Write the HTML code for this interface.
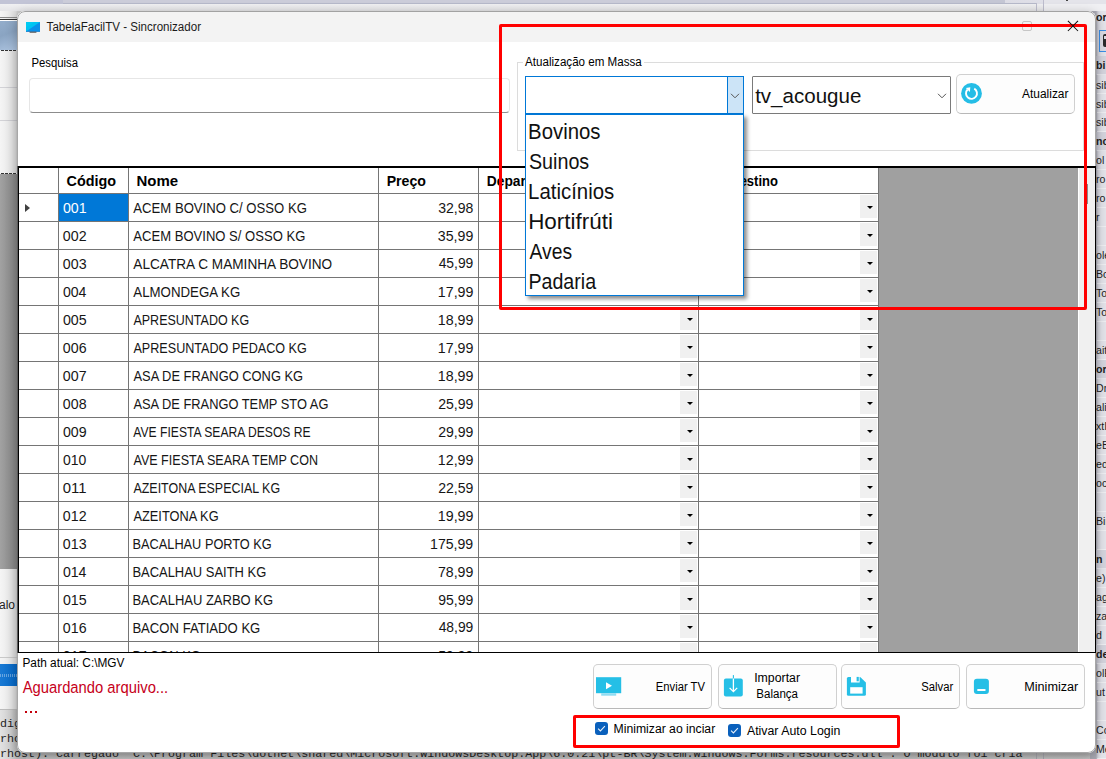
<!DOCTYPE html><html><head><meta charset="utf-8"><title>TabelaFacilTV - Sincronizador</title><style>
*{box-sizing:border-box;margin:0;padding:0}
html,body{width:1106px;height:759px;overflow:hidden;background:#e9e9ec;font-family:"Liberation Sans",sans-serif;color:#000}
.abs{position:absolute}
#bg{position:absolute;left:0;top:0;width:1106px;height:759px;overflow:hidden}
#win{position:absolute;left:17px;top:11px;width:1079px;height:742px;background:#fff;border-radius:8px;overflow:hidden}
#winsh{position:absolute;left:17px;top:11px;width:1079px;height:742px;border-radius:8px;box-shadow:0 3px 12px rgba(0,0,0,.3)}
#tbar{position:absolute;left:0;top:0;width:100%;height:31px;background:#f3f3f3}
.t{position:absolute;left:0;top:0;white-space:nowrap;line-height:1;transform-origin:0 0}
#grid{position:absolute;left:1px;top:155px;width:1078px;height:487px;background:#a0a0a0;border:1px solid #000;border-top:2px solid #000;overflow:hidden}
.hl{position:absolute;left:0;height:1px;background:#757575;width:860px}
.vl{position:absolute;top:0;width:1px;background:#757575;height:486px}
.dd{position:absolute;width:17px;height:23px;background:#f0f0f0}
.dd:after{content:"";position:absolute;left:6.5px;top:10.6px;border-left:3px solid transparent;border-right:3px solid transparent;border-top:3.6px solid #000}
.btn{position:absolute;background:#fdfdfd;border:1px solid #d0d0d0;border-bottom-color:#b8b8b8;border-radius:5px}
</style></head><body>
<div id="bg">
<div class="abs" style="left:0;top:0;width:1106px;height:759px;background:#e6e6ea"></div>
<div class="abs" style="left:0;top:0;width:1106px;height:4px;background:linear-gradient(90deg,#c2c4d6 0,#c2c4d6 63px,#cbccd9 63px,#cbccd9 900px,#c4c6d4 900px,#c4c6d4 1005px,#dddde6 1005px,#e2e2ea 100%)"></div>
<div class="abs" style="left:63px;top:3px;width:973px;height:1px;background:#b6b9ca"></div>
<div class="abs" style="left:0;top:4px;width:1106px;height:9px;background:linear-gradient(180deg,#f0f0f2,#e2e2e5)"></div>
<div class="abs" style="left:1043px;top:0;width:63px;height:4px;background:#e4e4ea"></div>
<div class="abs" style="left:1043px;top:4px;width:63px;height:9px;background:#f0f0f3"></div>
<div class="abs" style="left:1036px;top:3px;width:1px;height:9px;background:#bcbccc"></div>
<div class="abs" style="left:1043px;top:0;width:1px;height:12px;background:#bcbccc"></div>
<div class="abs" style="left:1066px;top:0;width:2px;height:1px;background:#444"></div>
<div class="abs" style="left:0;top:11px;width:26px;height:163px;background:linear-gradient(90deg,#f5f5f5 0,#eaeaea 9px,#dcdcdc 16px,#cfcfcf 17px,#c8c8c8 26px)"></div>
<div class="abs" style="left:0;top:17px;width:18px;height:1px;background:#8a8a8a"></div>
<div class="abs" style="left:0;top:19px;width:18px;height:1px;background:#333"></div>
<div class="abs" style="left:0;top:20px;width:18px;height:1px;background:#fff"></div>
<div class="abs" style="left:0;top:21px;width:26px;height:29px;background:linear-gradient(160deg,#93adcb 0,#8aa4c2 40%,#b3cae6 100%)"></div>
<div class="abs" style="left:1px;top:50px;width:16px;height:1px;background:repeating-linear-gradient(90deg,#333 0,#333 3px,transparent 3px,transparent 4px)"></div>
<div class="abs" style="left:0;top:87px;width:17px;height:1px;background:rgba(170,170,180,.45)"></div>
<div class="abs" style="left:0;top:120px;width:17px;height:1px;background:rgba(170,170,180,.45)"></div>
<div class="abs" style="left:1px;top:173px;width:16px;height:1px;background:repeating-linear-gradient(90deg,#333 0,#333 3px,#eee 3px,#eee 4px)"></div>
<div class="abs" style="left:0;top:174px;width:26px;height:395px;background:linear-gradient(90deg,#a2a2a2 0,#939393 8px,#858585 17px)"></div>
<div class="abs" style="left:0;top:569px;width:26px;height:88px;background:linear-gradient(90deg,#f5f5f5 0,#eaeaea 9px,#dcdcdc 16px,#cfcfcf 17px,#c8c8c8 26px)"></div>
<div class="abs" style="left:-1px;top:598px;font-size:12px;line-height:14px;color:#222;white-space:nowrap">alo</div>
<div class="abs" style="left:0;top:657px;width:26px;height:1px;background:#c8c8c8"></div>
<div class="abs" style="left:0;top:658px;width:26px;height:6px;background:linear-gradient(90deg,#f5f5f5 0,#eaeaea 9px,#dcdcdc 16px,#cfcfcf 17px,#c8c8c8 26px)"></div>
<div class="abs" style="left:0;top:664px;width:26px;height:22px;background:linear-gradient(90deg,#1a7ad4,#0668c6 17px)"></div>
<div class="abs" style="left:0;top:674px;width:17px;height:3px;background:repeating-linear-gradient(90deg,rgba(255,255,255,.35) 0,rgba(255,255,255,.35) 1px,transparent 1px,transparent 2px)"></div>
<div class="abs" style="left:0;top:686px;width:26px;height:23px;background:linear-gradient(90deg,#f5f5f5 0,#eaeaea 9px,#dcdcdc 16px,#cfcfcf 17px,#c8c8c8 26px)"></div>
<div class="abs" style="left:0;top:709px;width:26px;height:1px;background:#bbb"></div>
<div class="abs" style="left:0;top:710px;width:1106px;height:49px;background:linear-gradient(180deg,#dcdcdc 0,#d0d0d0 40px,#b4b4b4 44px,#c6c6c6 49px)"></div>
<div class="abs" style="left:0;top:710px;width:26px;height:49px;background:linear-gradient(90deg,#e2e2e2 0,#d0d0d0 10px,#b8b8b8 17px)"></div>
<div class="abs" style="left:0;top:717px;font-family:'Liberation Mono',monospace;font-size:11.68px;line-height:14px;color:#1e1e1e;white-space:pre">dig</div>
<div class="abs" style="left:0;top:732px;font-family:'Liberation Mono',monospace;font-size:11.68px;line-height:14px;color:#1e1e1e;white-space:pre">rho</div>
<div class="abs" style="left:0;top:747px;font-family:'Liberation Mono',monospace;font-size:11.68px;line-height:14px;color:#1e1e1e;white-space:pre">rhost). Carregado 'C:\Program Files\dotnet\shared\Microsoft.WindowsDesktop.App\6.0.21\pt-BR\System.Windows.Forms.resources.dll'. O módulo foi cria</div>
<div class="abs" style="left:1036px;top:753px;width:1px;height:6px;background:#a8a8b0"></div>
<div class="abs" style="left:1043px;top:753px;width:1px;height:6px;background:#a8a8b0"></div>
<div class="abs" style="left:1090px;top:11px;width:16px;height:748px;background:linear-gradient(90deg,#a9a9b3 6px,#d2d2da 8px,#e0e0e7 10px,#e4e4ea 12px)"></div>
<div class="abs" style="left:1096px;top:56px;width:10px;height:19px;background:rgba(200,200,212,.55)"></div>
<div class="abs" style="left:1096px;top:132px;width:10px;height:19px;background:rgba(200,200,212,.55)"></div>
<div class="abs" style="left:1096px;top:360px;width:10px;height:19px;background:rgba(200,200,212,.55)"></div>
<div class="abs" style="left:1096px;top:550px;width:10px;height:19px;background:rgba(200,200,212,.55)"></div>
<div class="abs" style="left:1096px;top:645px;width:10px;height:19px;background:rgba(200,200,212,.55)"></div>
<div class="abs" style="left:1097px;top:74px;width:9px;height:1px;background:rgba(255,255,255,.45)"></div>
<div class="abs" style="left:1097px;top:93px;width:9px;height:1px;background:rgba(255,255,255,.45)"></div>
<div class="abs" style="left:1097px;top:112px;width:9px;height:1px;background:rgba(255,255,255,.45)"></div>
<div class="abs" style="left:1097px;top:131px;width:9px;height:1px;background:rgba(255,255,255,.45)"></div>
<div class="abs" style="left:1097px;top:150px;width:9px;height:1px;background:rgba(255,255,255,.45)"></div>
<div class="abs" style="left:1097px;top:169px;width:9px;height:1px;background:rgba(255,255,255,.45)"></div>
<div class="abs" style="left:1097px;top:188px;width:9px;height:1px;background:rgba(255,255,255,.45)"></div>
<div class="abs" style="left:1097px;top:207px;width:9px;height:1px;background:rgba(255,255,255,.45)"></div>
<div class="abs" style="left:1097px;top:226px;width:9px;height:1px;background:rgba(255,255,255,.45)"></div>
<div class="abs" style="left:1097px;top:245px;width:9px;height:1px;background:rgba(255,255,255,.45)"></div>
<div class="abs" style="left:1097px;top:264px;width:9px;height:1px;background:rgba(255,255,255,.45)"></div>
<div class="abs" style="left:1097px;top:283px;width:9px;height:1px;background:rgba(255,255,255,.45)"></div>
<div class="abs" style="left:1097px;top:302px;width:9px;height:1px;background:rgba(255,255,255,.45)"></div>
<div class="abs" style="left:1097px;top:321px;width:9px;height:1px;background:rgba(255,255,255,.45)"></div>
<div class="abs" style="left:1097px;top:340px;width:9px;height:1px;background:rgba(255,255,255,.45)"></div>
<div class="abs" style="left:1097px;top:359px;width:9px;height:1px;background:rgba(255,255,255,.45)"></div>
<div class="abs" style="left:1097px;top:378px;width:9px;height:1px;background:rgba(255,255,255,.45)"></div>
<div class="abs" style="left:1097px;top:397px;width:9px;height:1px;background:rgba(255,255,255,.45)"></div>
<div class="abs" style="left:1097px;top:416px;width:9px;height:1px;background:rgba(255,255,255,.45)"></div>
<div class="abs" style="left:1097px;top:435px;width:9px;height:1px;background:rgba(255,255,255,.45)"></div>
<div class="abs" style="left:1097px;top:454px;width:9px;height:1px;background:rgba(255,255,255,.45)"></div>
<div class="abs" style="left:1097px;top:473px;width:9px;height:1px;background:rgba(255,255,255,.45)"></div>
<div class="abs" style="left:1097px;top:492px;width:9px;height:1px;background:rgba(255,255,255,.45)"></div>
<div class="abs" style="left:1097px;top:511px;width:9px;height:1px;background:rgba(255,255,255,.45)"></div>
<div class="abs" style="left:1097px;top:530px;width:9px;height:1px;background:rgba(255,255,255,.45)"></div>
<div class="abs" style="left:1097px;top:549px;width:9px;height:1px;background:rgba(255,255,255,.45)"></div>
<div class="abs" style="left:1097px;top:568px;width:9px;height:1px;background:rgba(255,255,255,.45)"></div>
<div class="abs" style="left:1097px;top:587px;width:9px;height:1px;background:rgba(255,255,255,.45)"></div>
<div class="abs" style="left:1097px;top:606px;width:9px;height:1px;background:rgba(255,255,255,.45)"></div>
<div class="abs" style="left:1097px;top:625px;width:9px;height:1px;background:rgba(255,255,255,.45)"></div>
<div class="abs" style="left:1097px;top:644px;width:9px;height:1px;background:rgba(255,255,255,.45)"></div>
<div class="abs" style="left:1097px;top:663px;width:9px;height:1px;background:rgba(255,255,255,.45)"></div>
<div class="abs" style="left:1097px;top:682px;width:9px;height:1px;background:rgba(255,255,255,.45)"></div>
<div class="abs" style="left:1097px;top:701px;width:9px;height:1px;background:rgba(255,255,255,.45)"></div>
<div class="abs" style="left:1097px;top:720px;width:9px;height:1px;background:rgba(255,255,255,.45)"></div>
<div class="abs" style="left:1097px;top:739px;width:9px;height:1px;background:rgba(255,255,255,.45)"></div>
<div class="abs" style="left:1097px;top:758px;width:9px;height:1px;background:rgba(255,255,255,.45)"></div>
<div class="abs" style="left:1099px;top:30px;width:12px;height:22px;border:1px solid #3b8fe8;background:#dcdce4"></div>
<div class="abs" style="left:1102.5px;top:34px;width:6px;height:13px;background:#2a2a2a;border-radius:2px 0 0 2px"></div>
<div class="abs" style="left:1104px;top:36px;width:3px;height:3px;background:#dcdce4"></div>
<div class="abs" style="left:1095.7px;top:10px;font-size:11.5px;line-height:14px;color:#1e1e1e;white-space:nowrap;transform:scaleX(.92);transform-origin:0 0;font-weight:bold;">or</div>
<div class="abs" style="left:1095.7px;top:58px;font-size:11.5px;line-height:14px;color:#1e1e1e;white-space:nowrap;transform:scaleX(.92);transform-origin:0 0;font-weight:bold;">bi</div>
<div class="abs" style="left:1095.7px;top:78px;font-size:11.5px;line-height:14px;color:#1e1e1e;white-space:nowrap;transform:scaleX(.92);transform-origin:0 0;">sib</div>
<div class="abs" style="left:1095.7px;top:97px;font-size:11.5px;line-height:14px;color:#1e1e1e;white-space:nowrap;transform:scaleX(.92);transform-origin:0 0;">sib</div>
<div class="abs" style="left:1095.7px;top:115px;font-size:11.5px;line-height:14px;color:#1e1e1e;white-space:nowrap;transform:scaleX(.92);transform-origin:0 0;">sib</div>
<div class="abs" style="left:1095.7px;top:134px;font-size:11.5px;line-height:14px;color:#1e1e1e;white-space:nowrap;transform:scaleX(.92);transform-origin:0 0;font-weight:bold;">no</div>
<div class="abs" style="left:1095.7px;top:153px;font-size:11.5px;line-height:14px;color:#1e1e1e;white-space:nowrap;transform:scaleX(.92);transform-origin:0 0;">ol</div>
<div class="abs" style="left:1095.7px;top:172px;font-size:11.5px;line-height:14px;color:#1e1e1e;white-space:nowrap;transform:scaleX(.92);transform-origin:0 0;">ro</div>
<div class="abs" style="left:1095.7px;top:191px;font-size:11.5px;line-height:14px;color:#1e1e1e;white-space:nowrap;transform:scaleX(.92);transform-origin:0 0;">ro</div>
<div class="abs" style="left:1095.7px;top:210px;font-size:11.5px;line-height:14px;color:#1e1e1e;white-space:nowrap;transform:scaleX(.92);transform-origin:0 0;">r</div>
<div class="abs" style="left:1095.7px;top:248px;font-size:11.5px;line-height:14px;color:#1e1e1e;white-space:nowrap;transform:scaleX(.92);transform-origin:0 0;">ole</div>
<div class="abs" style="left:1095.7px;top:267px;font-size:11.5px;line-height:14px;color:#1e1e1e;white-space:nowrap;transform:scaleX(.92);transform-origin:0 0;">Bo</div>
<div class="abs" style="left:1095.7px;top:286px;font-size:11.5px;line-height:14px;color:#1e1e1e;white-space:nowrap;transform:scaleX(.92);transform-origin:0 0;">Tol</div>
<div class="abs" style="left:1095.7px;top:305px;font-size:11.5px;line-height:14px;color:#1e1e1e;white-space:nowrap;transform:scaleX(.92);transform-origin:0 0;">Tol</div>
<div class="abs" style="left:1095.7px;top:343px;font-size:11.5px;line-height:14px;color:#1e1e1e;white-space:nowrap;transform:scaleX(.92);transform-origin:0 0;">ait</div>
<div class="abs" style="left:1095.7px;top:362px;font-size:11.5px;line-height:14px;color:#1e1e1e;white-space:nowrap;transform:scaleX(.92);transform-origin:0 0;font-weight:bold;">or</div>
<div class="abs" style="left:1095.7px;top:381px;font-size:11.5px;line-height:14px;color:#1e1e1e;white-space:nowrap;transform:scaleX(.92);transform-origin:0 0;">Dra</div>
<div class="abs" style="left:1095.7px;top:400px;font-size:11.5px;line-height:14px;color:#1e1e1e;white-space:nowrap;transform:scaleX(.92);transform-origin:0 0;">ali</div>
<div class="abs" style="left:1095.7px;top:419px;font-size:11.5px;line-height:14px;color:#1e1e1e;white-space:nowrap;transform:scaleX(.92);transform-origin:0 0;">xtI</div>
<div class="abs" style="left:1095.7px;top:438px;font-size:11.5px;line-height:14px;color:#1e1e1e;white-space:nowrap;transform:scaleX(.92);transform-origin:0 0;">eB</div>
<div class="abs" style="left:1095.7px;top:457px;font-size:11.5px;line-height:14px;color:#1e1e1e;white-space:nowrap;transform:scaleX(.92);transform-origin:0 0;">ed</div>
<div class="abs" style="left:1095.7px;top:476px;font-size:11.5px;line-height:14px;color:#1e1e1e;white-space:nowrap;transform:scaleX(.92);transform-origin:0 0;">oc</div>
<div class="abs" style="left:1095.7px;top:514px;font-size:11.5px;line-height:14px;color:#1e1e1e;white-space:nowrap;transform:scaleX(.92);transform-origin:0 0;">Bin</div>
<div class="abs" style="left:1095.7px;top:552px;font-size:11.5px;line-height:14px;color:#1e1e1e;white-space:nowrap;transform:scaleX(.92);transform-origin:0 0;font-weight:bold;">n</div>
<div class="abs" style="left:1095.7px;top:571px;font-size:11.5px;line-height:14px;color:#1e1e1e;white-space:nowrap;transform:scaleX(.92);transform-origin:0 0;">e)</div>
<div class="abs" style="left:1095.7px;top:590px;font-size:11.5px;line-height:14px;color:#1e1e1e;white-space:nowrap;transform:scaleX(.92);transform-origin:0 0;">ag</div>
<div class="abs" style="left:1095.7px;top:609px;font-size:11.5px;line-height:14px;color:#1e1e1e;white-space:nowrap;transform:scaleX(.92);transform-origin:0 0;">za</div>
<div class="abs" style="left:1095.7px;top:628px;font-size:11.5px;line-height:14px;color:#1e1e1e;white-space:nowrap;transform:scaleX(.92);transform-origin:0 0;">d</div>
<div class="abs" style="left:1095.7px;top:647px;font-size:11.5px;line-height:14px;color:#1e1e1e;white-space:nowrap;transform:scaleX(.92);transform-origin:0 0;font-weight:bold;">de</div>
<div class="abs" style="left:1095.7px;top:666px;font-size:11.5px;line-height:14px;color:#1e1e1e;white-space:nowrap;transform:scaleX(.92);transform-origin:0 0;">olE</div>
<div class="abs" style="left:1095.7px;top:685px;font-size:11.5px;line-height:14px;color:#1e1e1e;white-space:nowrap;transform:scaleX(.92);transform-origin:0 0;">ut</div>
<div class="abs" style="left:1095.7px;top:723px;font-size:11.5px;line-height:14px;color:#1e1e1e;white-space:nowrap;transform:scaleX(.92);transform-origin:0 0;">Co</div>
<div class="abs" style="left:1095.7px;top:742px;font-size:11.5px;line-height:14px;color:#1e1e1e;white-space:nowrap;transform:scaleX(.92);transform-origin:0 0;">Me</div>
</div>
<div id="winsh"></div>
<div id="win">
<div id="tbar"></div>
<div class="abs" style="left:0;top:0;width:1079px;height:742px;border:1px solid rgba(95,95,95,.55);border-radius:8px"></div>
<svg class="abs" style="left:8px;top:10px" width="17" height="13" viewBox="0 0 17 13"><rect x="1" y="1" width="14" height="9.6" fill="#0a90ea"/><path d="M1 1 H15 L1 10.6 Z" fill="#00c4f2"/><path d="M1 1 H9 L1 6.5 Z" fill="#00d0f4" fill-opacity=".6"/><rect x="1" y="10.1" width="14" height=".6" fill="#0a6fc0"/><rect x="4.6" y="10.7" width="6.8" height="1" fill="#4a4a4a"/></svg>
<div class="abs" style="left:1005px;top:10px;width:10px;height:10px;border:1px solid #c6c6c6;border-radius:2px"></div>
<div class="t" id="title" style="font-size:12px;color:#1b1b1b;transform:translate(29.62px,9.52px) scaleX(0.9647);">TabelaFacilTV - Sincronizador</div>
<div class="t" id="lblPesq" style="font-size:12px;color:#000;transform:translate(14.47px,45.52px) scaleX(0.9433);">Pesquisa</div>
<div class="abs" style="left:12px;top:67px;width:481px;height:35px;border:1px solid #e6e6e6;border-bottom:1px solid #8c8c8c;border-radius:4px;background:#fff"></div>
<div class="abs" style="left:500px;top:51px;width:567px;height:89px;border:1px solid #dcdcdc"></div>
<div class="abs" style="left:506px;top:44px;width:121px;height:14px;background:#fff"></div>
<div class="t" id="lblGrp" style="font-size:12px;color:#000;transform:translate(508.06px,44.52px) scaleX(0.9669);">Atualização em Massa</div>
<div class="abs" style="left:735px;top:65px;width:199px;height:38px;border:1px solid #7a7a7a;border-radius:1px;background:#fff"></div>
<div class="t" id="tv" style="font-size:20.5px;color:#111;transform:translate(738.13px,74.52px) scaleX(1.0016);">tv_acougue</div>
<svg class="abs" style="left:919px;top:81px" width="12" height="8" viewBox="0 0 12 8"><path d="M2 1.8 L6 5.8 L10 1.8" fill="none" stroke="#555" stroke-width="1"/></svg>
<div class="btn" style="left:939px;top:63px;width:119px;height:40px"></div>
<svg class="abs" style="left:944px;top:72px" width="21" height="21" viewBox="0 0 21 21"><circle cx="10.5" cy="10.4" r="10.4" fill="#25bde6"/><path d="M13.25 5.64 A5.5 5.5 0 1 1 6.6 6.5" fill="none" stroke="#fff" stroke-width="1.9"/><path d="M4.9 4.9 L9.3 4.2 L8.9 9 Z" fill="#fff"/></svg>
<div class="t" id="atu" style="font-size:12px;color:#000;transform:translate(1005.09px,77.03px) scaleX(0.9928);">Atualizar</div>
<div class="abs" style="left:0;top:155px;width:1px;height:487px;background:#5a5a5a"></div>
<div id="grid">
<div class="abs" style="left:0;top:0;width:860px;height:486px;background:#fff"></div>
<div class="abs" style="left:1059px;top:0;width:17px;height:486px;background:#f0f0f0;border-left:1px solid #fff"></div>
<div class="abs" style="left:1067px;top:16px;width:2px;height:20px;background:#8a8a8a"></div>
<div class="abs" style="left:40px;top:26px;width:69px;height:27px;background:#0078d7"></div>
<div class="hl" style="top:25px"></div>
<div class="hl" style="top:53px"></div>
<div class="hl" style="top:81px"></div>
<div class="hl" style="top:109px"></div>
<div class="hl" style="top:137px"></div>
<div class="hl" style="top:165px"></div>
<div class="hl" style="top:193px"></div>
<div class="hl" style="top:221px"></div>
<div class="hl" style="top:249px"></div>
<div class="hl" style="top:277px"></div>
<div class="hl" style="top:305px"></div>
<div class="hl" style="top:333px"></div>
<div class="hl" style="top:361px"></div>
<div class="hl" style="top:389px"></div>
<div class="hl" style="top:417px"></div>
<div class="hl" style="top:445px"></div>
<div class="hl" style="top:473px"></div>
<div class="hl" style="top:501px"></div>
<div class="vl" style="left:39px"></div>
<div class="vl" style="left:109px"></div>
<div class="vl" style="left:359px"></div>
<div class="vl" style="left:459px"></div>
<div class="vl" style="left:679px"></div>
<div class="vl" style="left:859px"></div>
<div class="t" id="hCod" style="font-size:14.4px;color:#000;transform:translate(47.60px,6.28px) scaleX(0.9994);font-weight:bold;">Código</div>
<div class="t" id="hNome" style="font-size:14.4px;color:#000;transform:translate(117.52px,6.28px) scaleX(1.0422);font-weight:bold;">Nome</div>
<div class="t" id="hPreco" style="font-size:14.4px;color:#000;transform:translate(367.64px,6.30px) scaleX(0.9829);font-weight:bold;">Preço</div>
<div class="t" id="hDep" style="font-size:14.4px;color:#000;transform:translate(467.75px,6.30px) scaleX(0.9590);font-weight:bold;">Depar</div>
<div class="t" id="hDest" style="font-size:14.4px;color:#000;transform:translate(711.24px,6.30px) scaleX(0.9032);font-weight:bold;">Destino</div>
<div class="abs" style="left:6px;top:35.5px;width:0;height:0;border-top:4.5px solid transparent;border-bottom:4.5px solid transparent;border-left:5px solid #404040"></div>
<div class="t" id="c0" style="font-size:14.1px;color:#fff;transform:translate(43.88px,33.39px) scaleX(1.0067);">001</div>
<div class="t" id="n0" style="font-size:14.1px;color:#161616;transform:translate(114.33px,32.63px) scaleX(0.9310);">ACEM BOVINO C/ OSSO KG</div>
<div class="t" id="p0" style="font-size:14.1px;color:#161616;transform:translate(419.14px,33.43px) scaleX(0.9984);">32,98</div>
<div class="dd" style="left:661px;top:27px"></div>
<div class="dd" style="left:841px;top:27px"></div>
<div class="t" id="c1" style="font-size:14.1px;color:#161616;transform:translate(43.85px,61.39px) scaleX(1.0089);">002</div>
<div class="t" id="n1" style="font-size:14.1px;color:#161616;transform:translate(114.33px,60.97px) scaleX(0.9265);">ACEM BOVINO S/ OSSO KG</div>
<div class="t" id="p1" style="font-size:14.1px;color:#161616;transform:translate(418.85px,61.43px) scaleX(1.0050);">35,99</div>
<div class="dd" style="left:661px;top:55px"></div>
<div class="dd" style="left:841px;top:55px"></div>
<div class="t" id="c2" style="font-size:14.1px;color:#161616;transform:translate(43.86px,89.40px) scaleX(1.0081);">003</div>
<div class="t" id="n2" style="font-size:14.1px;color:#161616;transform:translate(114.33px,89.43px) scaleX(0.9667);">ALCATRA C MAMINHA BOVINO</div>
<div class="t" id="p2" style="font-size:14.1px;color:#161616;transform:translate(419.66px,88.43px) scaleX(0.9830);">45,99</div>
<div class="dd" style="left:661px;top:83px"></div>
<div class="dd" style="left:841px;top:83px"></div>
<div class="t" id="c3" style="font-size:14.1px;color:#161616;transform:translate(43.88px,117.40px) scaleX(1.0009);">004</div>
<div class="t" id="n3" style="font-size:14.1px;color:#161616;transform:translate(114.33px,117.43px) scaleX(0.9410);">ALMONDEGA KG</div>
<div class="t" id="p3" style="font-size:14.1px;color:#161616;transform:translate(418.80px,117.43px) scaleX(1.0098);">17,99</div>
<div class="dd" style="left:661px;top:111px"></div>
<div class="dd" style="left:841px;top:111px"></div>
<div class="t" id="c4" style="font-size:14.1px;color:#161616;transform:translate(43.88px,145.43px) scaleX(1.0074);">005</div>
<div class="t" id="n4" style="font-size:14.1px;color:#161616;transform:translate(114.45px,145.43px) scaleX(0.8865);">APRESUNTADO KG</div>
<div class="t" id="p4" style="font-size:14.1px;color:#161616;transform:translate(418.80px,145.43px) scaleX(1.0098);">18,99</div>
<div class="dd" style="left:661px;top:139px"></div>
<div class="dd" style="left:841px;top:139px"></div>
<div class="t" id="c5" style="font-size:14.1px;color:#161616;transform:translate(43.87px,173.39px) scaleX(1.0081);">006</div>
<div class="t" id="n5" style="font-size:14.1px;color:#161616;transform:translate(114.45px,173.43px) scaleX(0.8938);">APRESUNTADO PEDACO KG</div>
<div class="t" id="p5" style="font-size:14.1px;color:#161616;transform:translate(418.80px,173.43px) scaleX(1.0098);">17,99</div>
<div class="dd" style="left:661px;top:167px"></div>
<div class="dd" style="left:841px;top:167px"></div>
<div class="t" id="c6" style="font-size:14.1px;color:#161616;transform:translate(43.85px,201.43px) scaleX(1.0089);">007</div>
<div class="t" id="n6" style="font-size:14.1px;color:#161616;transform:translate(114.45px,201.43px) scaleX(0.9143);">ASA DE FRANGO CONG KG</div>
<div class="t" id="p6" style="font-size:14.1px;color:#161616;transform:translate(418.80px,201.43px) scaleX(1.0098);">18,99</div>
<div class="dd" style="left:661px;top:195px"></div>
<div class="dd" style="left:841px;top:195px"></div>
<div class="t" id="c7" style="font-size:14.1px;color:#161616;transform:translate(43.87px,229.41px) scaleX(1.0062);">008</div>
<div class="t" id="n7" style="font-size:14.1px;color:#161616;transform:translate(114.45px,229.43px) scaleX(0.9117);">ASA DE FRANGO TEMP STO AG</div>
<div class="t" id="p7" style="font-size:14.1px;color:#161616;transform:translate(419.15px,229.43px) scaleX(0.9974);">25,99</div>
<div class="dd" style="left:661px;top:223px"></div>
<div class="dd" style="left:841px;top:223px"></div>
<div class="t" id="c8" style="font-size:14.1px;color:#161616;transform:translate(43.88px,257.41px) scaleX(1.0065);">009</div>
<div class="t" id="n8" style="font-size:14.1px;color:#161616;transform:translate(114.35px,257.43px) scaleX(0.8593);">AVE FIESTA SEARA DESOS RE</div>
<div class="t" id="p8" style="font-size:14.1px;color:#161616;transform:translate(419.15px,257.43px) scaleX(0.9974);">29,99</div>
<div class="dd" style="left:661px;top:251px"></div>
<div class="dd" style="left:841px;top:251px"></div>
<div class="t" id="c9" style="font-size:14.1px;color:#161616;transform:translate(43.88px,285.42px) scaleX(0.9917);">010</div>
<div class="t" id="n9" style="font-size:14.1px;color:#161616;transform:translate(114.45px,285.43px) scaleX(0.8902);">AVE FIESTA SEARA TEMP CON</div>
<div class="t" id="p9" style="font-size:14.1px;color:#161616;transform:translate(418.80px,285.43px) scaleX(1.0098);">12,99</div>
<div class="dd" style="left:661px;top:279px"></div>
<div class="dd" style="left:841px;top:279px"></div>
<div class="t" id="c10" style="font-size:14.1px;color:#161616;transform:translate(43.78px,313.35px) scaleX(1.0564);">011</div>
<div class="t" id="n10" style="font-size:14.1px;color:#161616;transform:translate(114.45px,313.43px) scaleX(0.8831);">AZEITONA ESPECIAL KG</div>
<div class="t" id="p10" style="font-size:14.1px;color:#161616;transform:translate(419.15px,313.43px) scaleX(0.9974);">22,59</div>
<div class="dd" style="left:661px;top:307px"></div>
<div class="dd" style="left:841px;top:307px"></div>
<div class="t" id="c11" style="font-size:14.1px;color:#161616;transform:translate(43.85px,341.39px) scaleX(1.0089);">012</div>
<div class="t" id="n11" style="font-size:14.1px;color:#161616;transform:translate(114.45px,341.43px) scaleX(0.9085);">AZEITONA KG</div>
<div class="t" id="p11" style="font-size:14.1px;color:#161616;transform:translate(418.80px,341.43px) scaleX(1.0098);">19,99</div>
<div class="dd" style="left:661px;top:335px"></div>
<div class="dd" style="left:841px;top:335px"></div>
<div class="t" id="c12" style="font-size:14.1px;color:#161616;transform:translate(43.86px,369.40px) scaleX(1.0081);">013</div>
<div class="t" id="n12" style="font-size:14.1px;color:#161616;transform:translate(113.54px,369.43px) scaleX(0.9055);">BACALHAU PORTO KG</div>
<div class="t" id="p12" style="font-size:14.1px;color:#161616;transform:translate(411.05px,369.43px) scaleX(1.0015);">175,99</div>
<div class="dd" style="left:661px;top:363px"></div>
<div class="dd" style="left:841px;top:363px"></div>
<div class="t" id="c13" style="font-size:14.1px;color:#161616;transform:translate(43.88px,397.39px) scaleX(1.0009);">014</div>
<div class="t" id="n13" style="font-size:14.1px;color:#161616;transform:translate(113.40px,397.43px) scaleX(0.9185);">BACALHAU SAITH KG</div>
<div class="t" id="p13" style="font-size:14.1px;color:#161616;transform:translate(418.93px,397.43px) scaleX(1.0041);">78,99</div>
<div class="dd" style="left:661px;top:391px"></div>
<div class="dd" style="left:841px;top:391px"></div>
<div class="t" id="c14" style="font-size:14.1px;color:#161616;transform:translate(43.88px,425.43px) scaleX(1.0074);">015</div>
<div class="t" id="n14" style="font-size:14.1px;color:#161616;transform:translate(113.40px,425.43px) scaleX(0.9205);">BACALHAU ZARBO KG</div>
<div class="t" id="p14" style="font-size:14.1px;color:#161616;transform:translate(419.27px,425.43px) scaleX(0.9922);">95,99</div>
<div class="dd" style="left:661px;top:419px"></div>
<div class="dd" style="left:841px;top:419px"></div>
<div class="t" id="c15" style="font-size:14.1px;color:#161616;transform:translate(43.87px,453.39px) scaleX(1.0081);">016</div>
<div class="t" id="n15" style="font-size:14.1px;color:#161616;transform:translate(113.38px,453.43px) scaleX(0.9300);">BACON FATIADO KG</div>
<div class="t" id="p15" style="font-size:14.1px;color:#161616;transform:translate(419.66px,452.41px) scaleX(0.9830);">48,99</div>
<div class="dd" style="left:661px;top:447px"></div>
<div class="dd" style="left:841px;top:447px"></div>
<div class="t" id="c16" style="font-size:14.1px;color:#161616;transform:translate(43.85px,481.43px) scaleX(1.0089);">017</div>
<div class="t" id="n16" style="font-size:14.1px;color:#161616;transform:translate(113.39px,481.43px) scaleX(0.9213);">BACON KG</div>
<div class="t" id="p16" style="font-size:14.1px;color:#161616;transform:translate(419.19px,481.43px) scaleX(0.9949);">59,99</div>
<div class="dd" style="left:661px;top:475px"></div>
<div class="dd" style="left:841px;top:475px"></div>
</div>
<div class="t" id="path" style="font-size:12px;color:#000;transform:translate(5.47px,646.32px) scaleX(0.9866);">Path atual: C:\MGV</div>
<div class="t" id="agu" style="font-size:15.65px;color:#c6001a;transform:translate(5.69px,668.79px) scaleX(0.9454);">Aguardando arquivo...</div>
<div class="abs" style="left:8.3px;top:700px;width:2px;height:2px;background:#c4000c"></div><div class="abs" style="left:13.3px;top:700px;width:2px;height:2px;background:#c4000c"></div><div class="abs" style="left:18.299999999999997px;top:700px;width:2px;height:2px;background:#c4000c"></div>
<div class="btn" style="left:576px;top:653px;width:119px;height:45px"></div>
<div class="btn" style="left:701px;top:653px;width:119px;height:45px"></div>
<div class="btn" style="left:824px;top:653px;width:119px;height:45px"></div>
<div class="btn" style="left:949px;top:653px;width:119px;height:45px"></div>
<svg class="abs" style="left:578px;top:665px" width="28" height="21" viewBox="0 0 28 21"><rect x="1" y="1.2" width="25.2" height="16" fill="#25bfe6"/><rect x="6.2" y="17.2" width="15" height="2.5" fill="#8fdcf2"/><path d="M11 6.3 L17 9.8 L11 13.3 Z" fill="#fff"/></svg>
<svg class="abs" style="left:706px;top:663px" width="21" height="24" viewBox="0 0 21 24"><rect x="0.9" y="4.6" width="18.9" height="18" rx="2" fill="#25bfe6"/><rect x="9.85" y="1.1" width="1.1" height="5" fill="#25bfe6"/><path d="M10.4 4.5 V17.6 M6.6 13.9 L10.4 17.7 L14.2 13.9" fill="none" stroke="#fff" stroke-width="1.3"/></svg>
<svg class="abs" style="left:829px;top:665px" width="21" height="21" viewBox="0 0 21 21"><path d="M2.4 0.9 H14.2 L19.9 6.4 V18.2 Q19.9 19.7 18.4 19.7 H2.4 Q0.9 19.7 0.9 18.2 V2.4 Q0.9 0.9 2.4 0.9 Z" fill="#25bfe6"/><rect x="5" y="0.9" width="8.6" height="5.6" fill="#fff"/><rect x="10.6" y="0.9" width="2.2" height="4.4" fill="#25bfe6"/><rect x="4.2" y="11.2" width="12.4" height="6.4" fill="#fff"/></svg>
<svg class="abs" style="left:956px;top:667px" width="17" height="17" viewBox="0 0 17 17"><rect x="0.9" y="0.8" width="15" height="15.2" rx="3" fill="#25bfe6"/><rect x="4.2" y="11" width="8.4" height="1.9" rx=".6" fill="#fff"/></svg>
<div class="t" id="env" style="font-size:12.3px;color:#000;transform:translate(638.76px,670.08px) scaleX(0.9161);">Enviar TV</div>
<div class="t" id="imp1" style="font-size:12.3px;color:#000;transform:translate(737.20px,660.83px) scaleX(1.0001);">Importar</div>
<div class="t" id="imp2" style="font-size:12.3px;color:#000;transform:translate(739.29px,677.28px) scaleX(0.9380);">Balança</div>
<div class="t" id="sal" style="font-size:12.3px;color:#000;transform:translate(904.29px,670.08px) scaleX(0.9187);">Salvar</div>
<div class="t" id="min" style="font-size:12.3px;color:#000;transform:translate(1007.22px,670.08px) scaleX(1.0275);">Minimizar</div>
<svg class="abs" style="left:578px;top:711px" width="13" height="13" viewBox="0 0 13 13"><rect x="0" y="0" width="13" height="13" rx="3" fill="#0a60bc"/><path d="M3.1 6.7 L5.4 8.9 L9.9 4.2" fill="none" stroke="#fff" stroke-opacity=".9" stroke-width="1.1"/></svg>
<svg class="abs" style="left:711px;top:713px" width="13" height="13" viewBox="0 0 13 13"><rect x="0" y="0" width="13" height="13" rx="3" fill="#0a60bc"/><path d="M3.1 6.7 L5.4 8.9 L9.9 4.2" fill="none" stroke="#fff" stroke-opacity=".9" stroke-width="1.1"/></svg>
<div class="t" id="cb1" style="font-size:12.3px;color:#000;transform:translate(596.57px,711.50px) scaleX(0.9914);">Minimizar ao inciar</div>
<div class="t" id="cb2" style="font-size:12.3px;color:#000;transform:translate(729.92px,714.39px) scaleX(1.0040);">Ativar Auto Login</div>
<div class="abs" style="left:508px;top:65px;width:219px;height:38px;border:1px solid #0078d7;background:#fff"></div>
<div class="abs" style="left:710px;top:66px;width:16px;height:36px;background:#cce4f7;border-left:1px solid #0078d7"></div>
<svg class="abs" style="left:712px;top:81.3px" width="12" height="8" viewBox="0 0 12 8"><path d="M2 1.8 L6 5.8 L10 1.8" fill="none" stroke="#555" stroke-width="1"/></svg>
<div class="abs" style="left:508px;top:103px;width:219px;height:182px;border:1px solid #0078d7;background:#fff;box-shadow:3px 3px 4px rgba(0,0,0,.45)"></div>
<div class="t" id="li0" style="font-size:21.3px;color:#111;transform:translate(511.11px,110.80px) scaleX(0.9561);">Bovinos</div>
<div class="t" id="li1" style="font-size:21.3px;color:#111;transform:translate(511.91px,141.16px) scaleX(0.9261);">Suinos</div>
<div class="t" id="li2" style="font-size:21.3px;color:#111;transform:translate(511.09px,170.80px) scaleX(0.9575);">Laticínios</div>
<div class="t" id="li3" style="font-size:21.3px;color:#111;transform:translate(511.13px,200.80px) scaleX(1.0530);">Hortifrúti</div>
<div class="t" id="li4" style="font-size:21.3px;color:#111;transform:translate(512.59px,231.25px) scaleX(0.9048);">Aves</div>
<div class="t" id="li5" style="font-size:21.3px;color:#111;transform:translate(511.41px,260.97px) scaleX(0.9221);">Padaria</div>
<div class="abs" style="left:482px;top:13px;width:588px;height:286px;border:3px solid #f00;border-radius:2px"></div>
<div class="abs" style="left:556px;top:704px;width:327px;height:33px;border:3px solid #f00;border-radius:2px"></div>
<svg class="abs" style="left:1050px;top:9px" width="12" height="12" viewBox="0 0 12 12"><path d="M0.9 0.9 L11 11 M11 0.9 L0.9 11" stroke="#111" stroke-width="1.05" fill="none"/></svg>
</div>
</body></html>
